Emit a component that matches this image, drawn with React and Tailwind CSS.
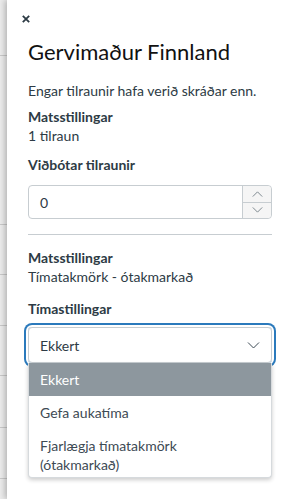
import React from "react";

const stripLines = [56, 169, 50, 51, 50, 52, 51];

const Chevron = ({ up = false, className = "" }) => (
  <svg viewBox="0 0 12 7" className={className} fill="none" stroke="currentColor" strokeWidth="1">
    {up ? <path d="M0.5 6.5 L6 1 L11.5 6.5" /> : <path d="M0.5 0.5 L6 6 L11.5 0.5" />}
  </svg>
);

export default function App() {
  return (
    <div
      className="flex w-[284px] h-[499px] overflow-hidden bg-white text-[#2d3b45]"
      style={{ fontFamily: "Lato, 'Open Sans', sans-serif" }}
    >
      {/* page behind the drawer */}
      <div className="w-[7px] shrink-0 bg-[#ececec] flex flex-col">
        {stripLines.map((h, i) => (
          <div key={i} className="shrink-0 border-b border-[#c9c9c9]" style={{ height: h }} />
        ))}
      </div>

      <div className="flex-1 bg-white shadow-[-2px_0_6px_rgba(0,0,0,0.25)] pl-[21px] pr-[12px] text-[14px]">
        <button className="mt-[14px] -ml-[6px] block h-[9px] w-[8px] text-[#2d3b45]">
          <svg viewBox="0 0 8 8" className="w-[8px] h-[8px]" stroke="currentColor" strokeWidth="1.8">
            <path d="M0.8 0.8 L7.2 7.2 M7.2 0.8 L0.8 7.2" />
          </svg>
        </button>

        <h2 className="mt-[14px] text-[22px] leading-[30px] text-[#111]">Gervimaður Finnland</h2>

        <p className="mt-[14px] leading-[20px]">Engar tilraunir hafa verið skráðar enn.</p>

        <div className="mt-[6px] leading-[19px]">
          <div className="font-bold">Matsstillingar</div>
          <div>1 tilraun</div>
        </div>

        <label className="block mt-[10px] leading-[20px] font-bold">Viðbótar tilraunir</label>
        <div className="mt-[10px] flex h-[34px] rounded-[4px] border border-[#c7cdd1]">
          <div className="flex-1 flex items-center px-[11px]">0</div>
          <div className="w-[29px] flex flex-col border-l border-[#c7cdd1] bg-[#f5f5f5] rounded-r-[4px] text-[#6b7780]">
            <div className="flex-1 flex items-center justify-center border-b border-[#c7cdd1]">
              <Chevron up className="w-[11px] h-[6px]" />
            </div>
            <div className="flex-1 flex items-center justify-center">
              <Chevron className="w-[11px] h-[6px]" />
            </div>
          </div>
        </div>

        <hr className="mt-[15px] border-0 border-t border-[#c7cdd1]" />

        <div className="mt-[13px] leading-[19px]">
          <div className="font-bold">Matsstillingar</div>
          <div>Tímatakmörk - ótakmarkað</div>
        </div>

        <label className="block mt-[13px] leading-[20px] font-bold">Tímastillingar</label>
        <div className="relative mt-[8px]">
          <div className="flex h-[36px] items-center justify-between rounded-[4px] border border-[#c7cdd1] px-[11px] ring-2 ring-[#2b7abc] ring-offset-2">
            <span>Ekkert</span>
            <Chevron className="w-[13px] h-[7px] text-[#3d4a54]" />
          </div>
          <ul className="absolute left-0 right-0 top-[36px] bg-white rounded-b-[4px] border border-t-0 border-[#d6dadd] shadow-[0_2px_4px_rgba(0,0,0,0.2)] text-[#3d4a54]">
            <li className="h-[33px] leading-[33px] px-[11px] bg-[#8d979e] text-white">Ekkert</li>
            <li className="py-[7px] leading-[20px] px-[11px]">Gefa aukatíma</li>
            <li className="pt-[6px] pb-[3px] leading-[19px] px-[11px]">
              Fjarlægja tímatakmörk
              <br />
              (ótakmarkað)
            </li>
          </ul>
        </div>
      </div>
    </div>
  );
}
